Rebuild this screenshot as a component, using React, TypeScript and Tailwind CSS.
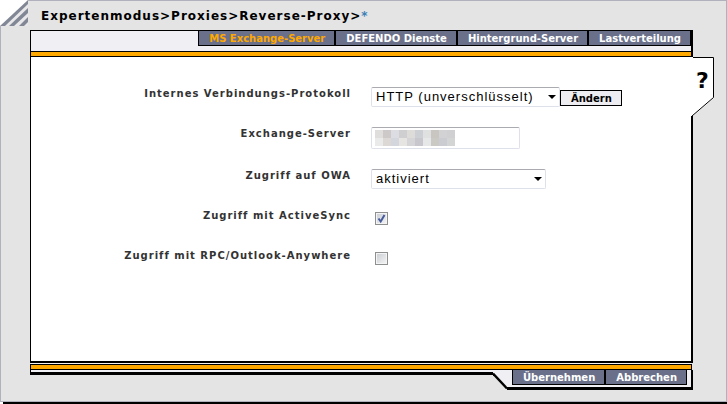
import { useState } from 'react';
import type { ReactNode } from 'react';

const tabs = ['MS Exchange-Server', 'DEFENDO Dienste', 'Hintergrund-Server', 'Lastverteilung'];

const maskRows = [
  ['#dfdedc', '#cdc9c8', '#dcdde3', '#cfcfd1', '#dddcd8', '#ccd0d4', '#dfe0e0', '#c9c5c1', '#d2d1d4', '#d0d0d2'],
  ['#e9eae9', '#dcd8d5', '#d3d6dd', '#e6e5e1', '#d5d5d8', '#c8c7cd', '#e6e8e8', '#cbc9c4', '#cbccd2', '#d3d4d4'],
];

function Corner() {
  return (
    <svg className="absolute -left-px -top-px" width="28" height="26" viewBox="0 0 28 26" aria-hidden="true">
      <path d="M0 0H28V1L1 26H0Z" fill="#fff" />
      <path d="M28 1V26H1Z" fill="#e8e8ea" />
      <path d="M0 26L28 0V4L5 26Z" fill="#828796" />
      <path d="M9 26L28 8V13L14 26Z" fill="#828796" />
      <path d="M19 26L28 17V22L24 26Z" fill="#828796" />
    </svg>
  );
}

function Arrow() {
  return (
    <svg className="pointer-events-none absolute right-1 top-2" width="8" height="5" viewBox="0 0 8 5" aria-hidden="true">
      <path d="M0 0H8L4 4Z" fill="#000" />
    </svg>
  );
}

function Row({ id, label, tall, children }: { id: string; label: string; tall?: boolean; children: ReactNode }) {
  return (
    <div className={`flex items-start gap-5 ${tall ? 'h-[42px]' : 'h-10'}`}>
      <label htmlFor={id} className="w-80 shrink-0 text-right text-[10px] font-bold leading-[14px] tracking-[1px] text-[#333]">
        {label}
      </label>
      <div className="flex shrink-0 items-start">{children}</div>
    </div>
  );
}

const selectStyle =
  'block h-5 w-full appearance-none rounded-xs border border-[#dfe1ea] border-t-[#aaabb1] bg-white pl-1 font-["Liberation_Sans",Arial,sans-serif] text-[13px] leading-4 tracking-[1px] text-black';

function Tick({ id, initial }: { id: string; initial: boolean }) {
  const [on, setOn] = useState(initial);
  return (
    <span className="relative ml-1 mt-[3px] block h-[13px] w-[13px]">
      <input
        id={id}
        type="checkbox"
        checked={on}
        onChange={(e) => setOn(e.target.checked)}
        className="block h-[13px] w-[13px] appearance-none border border-[#8e8f8f] bg-linear-to-br from-[#c8ccd2] to-[#f6f6f6] shadow-[inset_0_0_0_1px_#f4f4f4]"
      />
      {on && (
        <svg className="pointer-events-none absolute left-0 top-0" width="13" height="13" viewBox="0 0 13 13" aria-hidden="true">
          <path d="M3.5 6.5L5.7 9.5L9.5 3" fill="none" stroke="#465b9c" strokeWidth="2" />
        </svg>
      )}
    </span>
  );
}

const barButton = 'h-[15px] border-x border-b border-black bg-[#6a708a] pl-2.5 pr-[9px] pt-0.5 text-[10px] font-bold leading-3';

export default function App() {
  const [active, setActive] = useState(0);
  return (
    <div className='flex min-h-screen flex-col bg-white font-["DejaVu_Sans",Verdana,sans-serif]'>
      <div className="relative flex flex-1 flex-col border border-[#b0b1bd] bg-[#e4e4e4] pb-[11px] pl-[29px] pr-[33px]">
        <Corner />
        <h1 className="h-[29px] shrink-0 pl-[11px] pt-[7px] text-[12px] font-bold leading-4 tracking-[1px] text-black">
          Expertenmodus&gt;Proxies&gt;Reverse-Proxy&gt;<span className="text-[#3a7fb5]">*</span>
        </h1>

        <main className="relative flex flex-1 flex-col border-b-2 border-l border-r-2 border-t border-black bg-white">
          <nav className="flex h-5 shrink-0 items-start justify-end bg-[#f0eff3]">
            {tabs.map((tab, i) => (
              <button
                key={tab}
                type="button"
                onClick={() => setActive(i)}
                className={`${barButton} ${i === active ? 'text-[#ffa800]' : 'text-white'}`}
              >
                {tab}
              </button>
            ))}
          </nav>
          <div className="h-[6px] shrink-0 border-y border-black bg-[#ffa800]" />

          <form className="flex-1 pt-[30px]" onSubmit={(e) => e.preventDefault()}>
            <Row id="protocol" label="Internes Verbindungs-Protokoll">
              <span className="relative block w-[189px]">
                <select id="protocol" className={selectStyle}>
                  <option>HTTP (unverschlüsselt)</option>
                  <option>HTTPS (verschlüsselt)</option>
                </select>
                <Arrow />
              </span>
              <button
                type="submit"
                className="mt-[3px] h-4 border border-black bg-[#eeeef2] pl-2.5 pr-[9px] pt-0.5 text-[10px] font-bold leading-3 text-black"
              >
                Ändern
              </button>
            </Row>
            <Row id="server" label="Exchange-Server" tall>
              <span className="relative block w-[149px]">
                <input
                  id="server"
                  type="text"
                  className="block h-[22px] w-full rounded-xs border border-[#dfe1ea] border-t-[#aaabb1] bg-white px-1 text-[13px]"
                />
                <span className="pointer-events-none absolute left-1 top-[3px] grid grid-cols-10">
                  {maskRows.flat().map((color, i) => (
                    <span key={i} className="h-2 w-2" style={{ backgroundColor: color }} />
                  ))}
                </span>
              </span>
            </Row>
            <Row id="owa" label="Zugriff auf OWA">
              <span className="relative block w-[175px]">
                <select id="owa" className={selectStyle}>
                  <option>aktiviert</option>
                  <option>deaktiviert</option>
                </select>
                <Arrow />
              </span>
            </Row>
            <Row id="activesync" label="Zugriff mit ActiveSync">
              <Tick id="activesync" initial />
            </Row>
            <Row id="rpc" label="Zugriff mit RPC/Outlook-Anywhere">
              <Tick id="rpc" initial={false} />
            </Row>
          </form>

          <button
            type="button"
            aria-label="Hilfe"
            className="absolute -right-[23px] top-[26px] h-[60px] w-[23px] text-[22px] font-bold leading-6 text-black"
          >
            <svg className="absolute left-0 top-0" width="23" height="60" viewBox="0 0 23 60" aria-hidden="true">
              <path d="M0 0H23V41L2 59H0Z" fill="#fff" />
              <path d="M2 0.5H22.5V40.5L1 59" fill="none" stroke="#000" />
            </svg>
            <span className="relative block pb-3">?</span>
          </button>
        </main>

        <div className="ml-px mr-[2px] h-px shrink-0 bg-[#f4f4f4]" />

        <footer className="shrink-0">
          <div className="mr-px h-[6px] border border-black bg-[#ffa800]" />
          <div className="flex items-start">
            <div className="h-[5px] flex-1 border-b-[3px] border-l border-black bg-[#f0eff3]" />
            <svg width="14" height="20" viewBox="0 0 14 20" className="shrink-0" aria-hidden="true">
              <path d="M0 0H14V18L0 3Z" fill="#f0eff3" />
              <path d="M0 3.5L14 18.5" fill="none" stroke="#000" strokeWidth="2.5" />
            </svg>
            <div className="flex h-5 items-start border-b-[3px] border-r-2 border-black bg-[#f0eff3] pl-[5px] pr-1">
              <button type="submit" className={`${barButton} text-white`}>
                Übernehmen
              </button>
              <button type="button" className={`${barButton} text-white`}>
                Abbrechen
              </button>
            </div>
          </div>
        </footer>
      </div>
      <div className="ml-[3px] h-0.5 shrink-0 bg-black" />
    </div>
  );
}
